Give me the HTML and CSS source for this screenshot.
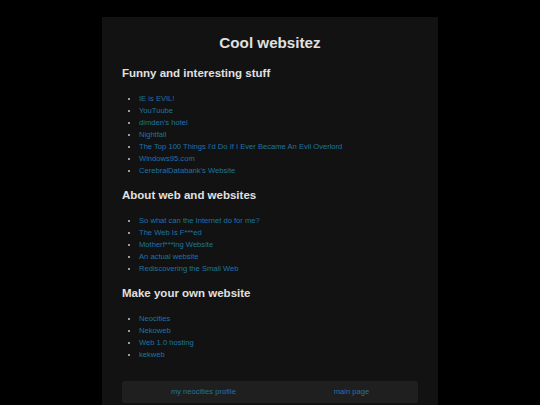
FILE: index.html
```html
<!DOCTYPE html>
<html>
<head>
<meta charset="utf-8">
<title>Cool websitez</title>
<link rel="stylesheet" href="styles.css">
</head>
<body>
<main class="page">
  <h1 class="title">Cool websitez</h1>

  <h2 class="section">Funny and interesting stuff</h2>
  <ul class="links">
    <li><a href="#">IE is EVIL!</a></li>
    <li><a href="#">YouTuube</a></li>
    <li><a href="#">dimden's hotel</a></li>
    <li><a href="#">Nightfall</a></li>
    <li><a href="#">The Top 100 Things I'd Do If I Ever Became An Evil Overlord</a></li>
    <li><a href="#">Windows95.com</a></li>
    <li><a href="#">CerebralDatabank's Website</a></li>
  </ul>

  <h2 class="section">About web and websites</h2>
  <ul class="links">
    <li><a href="#">So what can the Internet do for me?</a></li>
    <li><a href="#">The Web Is F***ed</a></li>
    <li><a href="#">Motherf***ing Website</a></li>
    <li><a href="#">An actual website</a></li>
    <li><a href="#">Rediscovering the Small Web</a></li>
  </ul>

  <h2 class="section">Make your own website</h2>
  <ul class="links">
    <li><a href="#">Neocities</a></li>
    <li><a href="#">Nekoweb</a></li>
    <li><a href="#">Web 1.0 hosting</a></li>
    <li><a href="#">kekweb</a></li>
  </ul>

  <nav class="footer">
    <a href="#">my neocities profile</a>
    <a href="#">main page</a>
  </nav>
</main>
</body>
</html>
```

FILE: styles.css
```css
html, body {
  margin: 0;
  padding: 0;
  background: #000;
}

body {
  font-family: "Liberation Sans", Arial, sans-serif;
  font-size: 7.6px;
  color: #ddd;
  padding-top: 17px;
}

.page {
  width: 296px;
  margin: 0 auto;
  padding: 17px 20px 20px;
  background: #121212;
}

.title {
  margin: 0 0 14px;
  font-size: 15.2px;
  line-height: 18px;
  text-align: center;
  color: #e0e0e0;
}

.section {
  margin: 11px 0;
  font-size: 11.5px;
  line-height: 14px;
  color: #e0e0e0;
}

.links {
  margin: 13px 0 11px;
  padding-left: 17px;
  line-height: 12px;
  color: #ccc;
}

a {
  color: #1f74a2;
  text-decoration: none;
}

.footer {
  margin-top: 20px;
  display: flex;
  justify-content: space-around;
  background: #1f1f1f;
  border-radius: 3px;
  padding: 5px 0;
  line-height: 12px;
}
```
